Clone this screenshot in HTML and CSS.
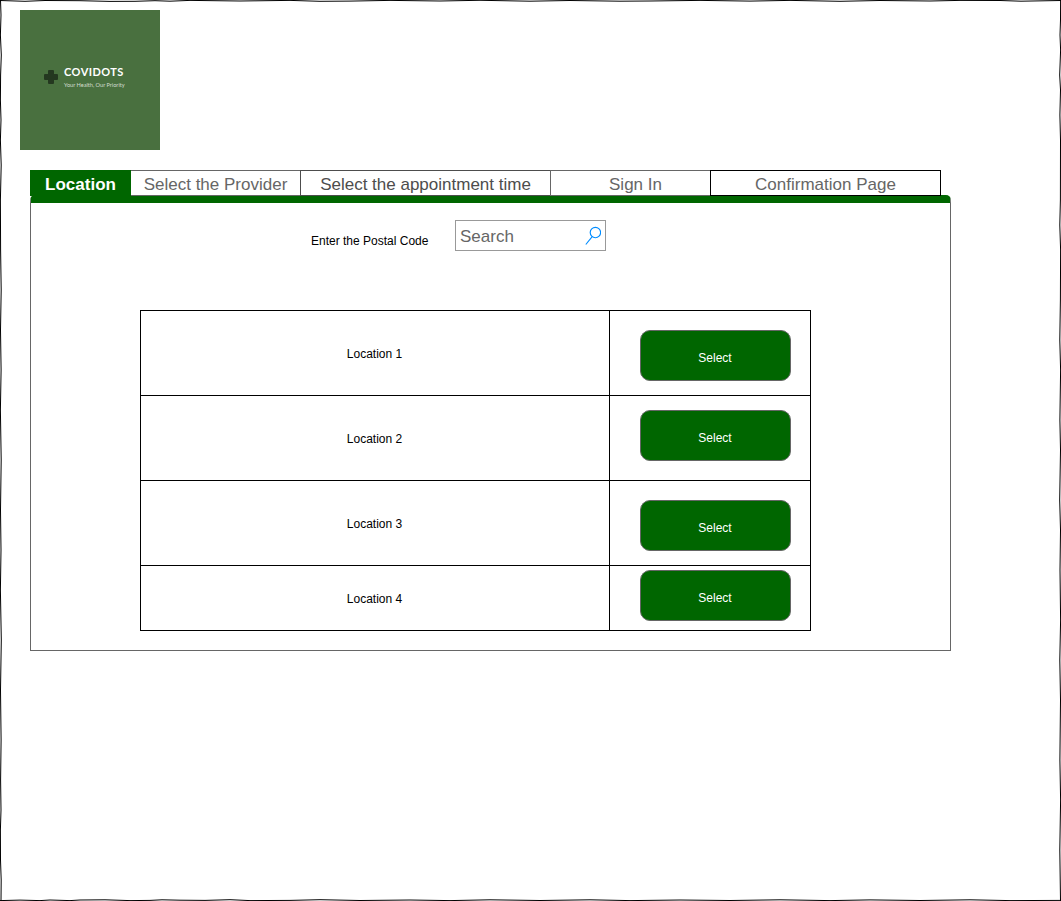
FILE: index.html
```html
<!DOCTYPE html>
<html lang="en">
<head>
<meta charset="utf-8">
<title>Covidots</title>
<link rel="stylesheet" href="styles.css">
</head>
<body>
<svg class="frame" viewBox="0 0 1061 901" fill="none" stroke="#000">
  <path d="M0 .5L25 1.3 45 .5 80 .7 110 1.4 135 1.3 155 .7 170 1.2 190 .4 240 1 290 .4 320 1.3 350 1.1 390 .4 440 1 480 .3 530 1.2 570 .5 620 1.2 650 1 700 .4 750 1.1 790 .4 840 1.3 880 .5 930 1 960 .4 1000 .5 1021 1.2 1061 .5"/>
  <path d="M1060.6 0L1060.5 20 1060 35 1060.6 50 1059.7 75 1060.5 90 1059.9 115 1060.5 140 1060.4 200 1059.8 225 1060.6 250 1060.4 300 1059.8 340 1060.6 370 1059.9 420 1060.5 450 1059.7 500 1060.5 530 1060 570 1060.6 620 1059.8 660 1060.5 700 1059.9 760 1060.6 800 1059.8 850 1060.5 901"/>
  <path d="M0 900.6L20 900.1 40 900.6 50 900 70 900.6 80 900 105 899.8 130 900.6 150 900.4 162 899.8 180 900.2 205 900.4 230 899.7 250 900.6 290 900.4 320 899.7 360 900.5 410 900 450 900.6 490 899.8 540 900.5 590 899.8 630 900.6 680 900 730 900.5 780 899.8 830 900.6 870 899.9 920 900.5 970 899.8 1010 900.6 1061 900.4"/>
  <path d="M.5 0L1 15 .4 35 1.3 55 .6 75 .4 100 1 120 .4 140 1.2 165 .4 200 .6 250 1.2 290 .5 330 1.1 370 .4 410 1.2 460 .5 510 1 550 .4 590 1.3 640 .5 690 1.1 740 .6 780 1 810 .4 830 .5 860 1.2 880 1 901"/>
</svg>
<main class="page">
  <header class="logo">
    <svg class="cross" viewBox="0 0 14 14"><path d="M5 0h4q1 0 1 1v3h3q1 0 1 1v4q0 1-1 1h-3v3q0 1-1 1H5q-1 0-1-1v-3H1q-1 0-1-1V5q0-1 1-1h3V1q0-1 1-1z" fill="#243820"/></svg>
    <div class="brand">
      <div class="name">COVIDOTS</div>
      <div class="tagline">Your Health, Our Priority</div>
    </div>
  </header>
  <nav class="tabs">
    <div class="tab tab-location">Location</div>
    <div class="tab tab-provider">Select the Provider</div>
    <div class="tab tab-time">Select the appointment time</div>
    <div class="tab tab-signin">Sign In</div>
    <div class="tab tab-confirm">Confirmation Page</div>
  </nav>
  <section class="panel">
    <div class="search-row">
      <label class="label">Enter the Postal Code</label>
      <div class="search">
        <span>Search</span>
        <svg class="glass" viewBox="0 0 16 20" fill="none" stroke="#008cff" stroke-width="1.15"><circle cx="10.4" cy="6.5" r="5.2"/><path d="M7.2 10.7.8 18.5"/></svg>
      </div>
    </div>
    <div class="locations">
      <div class="row"><div class="place">Location 1</div><div class="action top-19"><div class="button">Select</div></div></div>
      <div class="row"><div class="place">Location 2</div><div class="action top-14"><div class="button">Select</div></div></div>
      <div class="row"><div class="place">Location 3</div><div class="action top-19"><div class="button">Select</div></div></div>
      <div class="row short"><div class="place">Location 4</div><div class="action top-4"><div class="button">Select</div></div></div>
    </div>
  </section>
</main>
</body>
</html>
```
FILE: styles.css
```css
* { box-sizing: border-box; }
body {
  margin: 0;
  background: #fff;
  font: 12px/14px "Liberation Sans", Arial, sans-serif;
  color: #000;
}
.frame {
  position: absolute;
  top: 0;
  left: 0;
  width: 1061px;
  height: 901px;
  pointer-events: none;
}
.page { height: 901px; padding: 10px 0 0 20px; overflow: hidden; }

.logo {
  display: flex;
  width: 140px;
  height: 140px;
  padding: 56px 0 0 24px;
  gap: 6px;
  background: #49703f;
  color: #fff;
}
.cross { width: 14px; height: 14px; margin-top: 4px; }
.brand { white-space: nowrap; font-family: Lato, sans-serif; }
.name { font-size: 11px; line-height: 12px; font-weight: 700; letter-spacing: .45px; }
.tagline { margin-top: 3px; font-size: 5.6px; line-height: 8px; color: #d3ddd0; }

.tabs { display: flex; margin: 20px 0 0 10px; }
.tab {
  height: 26px;
  margin-right: -1px;
  border: 1px solid #666;
  font-size: 17px;
  line-height: 27px;
  text-align: center;
  white-space: nowrap;
  color: #666;
}
.tab-location { width: 101px; background: #060; border-color: #060; color: #fff; font-weight: bold; position: relative; }
.tab-provider { width: 171px; }
.tab-time { width: 251px; border-color: #4d4d4d; color: #4d4d4d; }
.tab-signin { width: 161px; padding-left: 10px; }
.tab-confirm { width: 231px; border-color: #000; position: relative; }

.panel {
  width: 921px;
  height: 456px;
  margin: -1px 0 0 10px;
  border: 1px solid #666;
  border-top: 8px solid #060;
  border-radius: 5px 5px 0 0;
}
.search-row { display: flex; padding: 17px 0 0 280px; }
.label { width: 144px; padding-top: 14px; white-space: nowrap; }
.search {
  display: flex;
  justify-content: space-between;
  width: 151px;
  height: 31px;
  padding: 0 4px 0 4px;
  border: 1px solid #999;
  font-size: 17px;
  line-height: 31px;
  color: #666;
}
.glass { width: 16px; height: 20px; margin-top: 5px; }

.locations { width: 671px; margin: 59px 0 0 109px; border: 1px solid #000; }
.row { display: flex; height: 85px; border-bottom: 1px solid #000; }
.row.short { height: 64px; border-bottom: 0; }
.place {
  display: flex;
  align-items: center;
  justify-content: center;
  width: 469px;
  padding: 2px 1px 0 0;
  border-right: 1px solid #000;
}
.action { padding-left: 30px; }
.top-4 { padding-top: 4px; }
.top-14 { padding-top: 14px; }
.top-19 { padding-top: 19px; }
.button {
  width: 151px;
  height: 51px;
  padding: 20px 1px 0 0;
  border: 1px solid #666;
  border-radius: 10px;
  background: #060;
  color: #fff;
  text-align: center;
}
```
